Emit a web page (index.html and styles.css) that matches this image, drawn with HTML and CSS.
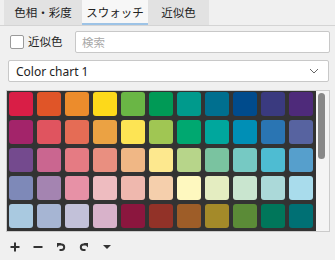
FILE: index.html
```html
<!DOCTYPE html>
<html lang="ja">
<head>
<meta charset="UTF-8">
<title>スウォッチ</title>
<link rel="stylesheet" href="styles.css">
</head>
<body>
<div class="panel">

  <div class="tabs">
    <div class="tab tab-hue">色相・彩度</div>
    <div class="tab tab-swatch active">スウォッチ</div>
    <div class="tab tab-near">近似色</div>
  </div>

  <div class="search-row">
    <label class="near-check"><span class="box"></span>近似色</label>
    <input type="text" class="search" placeholder="検索">
  </div>

  <div class="select">
    <span>Color chart 1</span>
    <svg width="10" height="6" viewBox="0 0 10 6"><path d="M1 1l4 4 4-4" fill="none" stroke="#666" stroke-width="1"/></svg>
  </div>

  <div class="swatch-box">
    <div class="grid" id="grid"></div>
    <div class="scrollbar"><div class="thumb"></div></div>
  </div>

  <div class="toolbar">
    <svg width="12" height="12" viewBox="0 0 12 12"><path d="M6 1.5v9M1.5 6h9" stroke="#333" stroke-width="2"/></svg>
    <svg width="12" height="12" viewBox="0 0 12 12"><path d="M1.5 6h9" stroke="#333" stroke-width="2"/></svg>
    <svg width="12" height="12" viewBox="0 0 12 12"><path d="M4 3.5h2.5a2.7 2.7 0 0 1 0 5.4H4.5" fill="none" stroke="#333" stroke-width="2"/><path d="M2 2h4.5L2 6.5z" fill="#333"/></svg>
    <svg width="12" height="12" viewBox="0 0 12 12"><path d="M8 3.5H5.5a2.7 2.7 0 0 0 0 5.4h2" fill="none" stroke="#333" stroke-width="2"/><path d="M10 2H5.5L10 6.5z" fill="#333"/></svg>
    <svg width="12" height="12" viewBox="0 0 12 12"><path d="M2 4h8l-4 4z" fill="#333"/></svg>
  </div>

</div>

<script>
const colors = [
  "#d91e46","#e05528","#ec8c2c","#fdd91a","#6ab645","#009a56","#009a8c","#006f8f","#004b8c","#3a3a7f","#4e2a7a",
  "#a3246a","#e0545f","#e56c55","#eba243","#fde454","#a0c653","#00a870","#00a79d","#008fb6","#2a75b3","#5763a0",
  "#744a8e","#ca6690","#e57b83","#e98f80","#f0b785","#fde88e","#b7d58a","#7ac3a0","#76c9c3","#4ebcd2","#569fcc",
  "#7e89b8","#a484b1","#e791a6","#eebcc0","#efb8ae","#f5cfac","#fef8bf","#e4edc1","#c9e5cf","#abd9d9","#a9dcec",
  "#a9c9e0","#a6b5d3","#c2c1d9","#d8b2ca","#8b163e","#923228","#9e5d28","#a48a29","#5b8b37","#00765a","#007074",
  "#0b4f6c","#1d3f73","#2b2c5e","#3c2461","#5c1f4f","#6b1c1c","#6b3a14","#6b5a14","#3a5a22","#0d4d3a","#0d4848"
];

const grid = document.getElementById("grid");
colors.forEach(c => {
  const sw = document.createElement("div");
  sw.className = "swatch";
  sw.style.background = c;
  grid.appendChild(sw);
});
</script>
</body>
</html>
```

FILE: styles.css
```css
body {
  margin: 0;
  background: #f0f0f0;
  font-family: "Noto Sans", "Noto Sans CJK JP", sans-serif;
  font-size: 12px;
  color: #222;
}

.panel {
  width: 335px;
  height: 260px;
  overflow: hidden;
}

/* tabs */
.tabs {
  display: flex;
  height: 26px;
  padding-left: 4px;
  border-bottom: 1px solid #d4d4d4;
  box-sizing: border-box;
}

.tab {
  display: flex;
  align-items: center;
  justify-content: center;
  height: 25px;
  background: #e2e2e2;
  box-sizing: border-box;
  line-height: 1;
  font-size: 11.5px;
}

.tab-hue { width: 78px; }
.tab-swatch { width: 66px; }
.tab-near { width: 61px; }

.tab.active {
  background: #f7f7f7;
  border-bottom: 2px solid #9dc3e6;
  padding-top: 2px;
}

/* search */
.search-row {
  display: flex;
  align-items: center;
  margin-top: 5px;
  padding-left: 10px;
  height: 22px;
}

.near-check {
  display: flex;
  align-items: center;
  width: 65px;
  line-height: 1;
  font-size: 11.5px;
}

.box {
  width: 12px;
  height: 12px;
  border: 1px solid #9a9a9a;
  border-radius: 2px;
  background: #fff;
  margin-right: 4px;
}

.search {
  width: 255px;
  height: 22px;
  box-sizing: border-box;
  border: 1px solid #c8c8c8;
  border-radius: 2px;
  padding: 0 6px;
  font-family: inherit;
  font-size: 11.5px;
  outline: none;
  background: #fff;
}

.search::placeholder {
  color: #a8a8a8;
}

/* dropdown */
.select {
  display: flex;
  align-items: center;
  justify-content: space-between;
  margin: 7px 0 0 8px;
  width: 321px;
  height: 22px;
  box-sizing: border-box;
  border: 1px solid #c8c8c8;
  border-radius: 2px;
  background: #fff;
  padding: 0 9px 0 7px;
}

/* swatches */
.swatch-box {
  display: flex;
  margin: 8px 0 0 6px;
  width: 324px;
  height: 142px;
  box-sizing: border-box;
  border: 1px solid #cbcbcb;
}

.grid {
  width: 309px;
  height: 140px;
  background: #333;
  box-sizing: border-box;
  padding: 1px 3px 0 2px;
  display: grid;
  grid-template-columns: repeat(11, 24px);
  grid-auto-rows: 24px;
  gap: 4px;
  overflow: hidden;
}

.swatch {
  border-radius: 3px;
}

.scrollbar {
  flex: 1;
  background: #f4f4f4;
  padding: 2px 3px 0 2px;
}

.thumb {
  width: 7px;
  height: 66px;
  background: #888;
  border-radius: 4px;
}

/* toolbar */
.toolbar {
  display: flex;
  align-items: center;
  gap: 11px;
  padding: 9px 0 0 9px;
}
```
